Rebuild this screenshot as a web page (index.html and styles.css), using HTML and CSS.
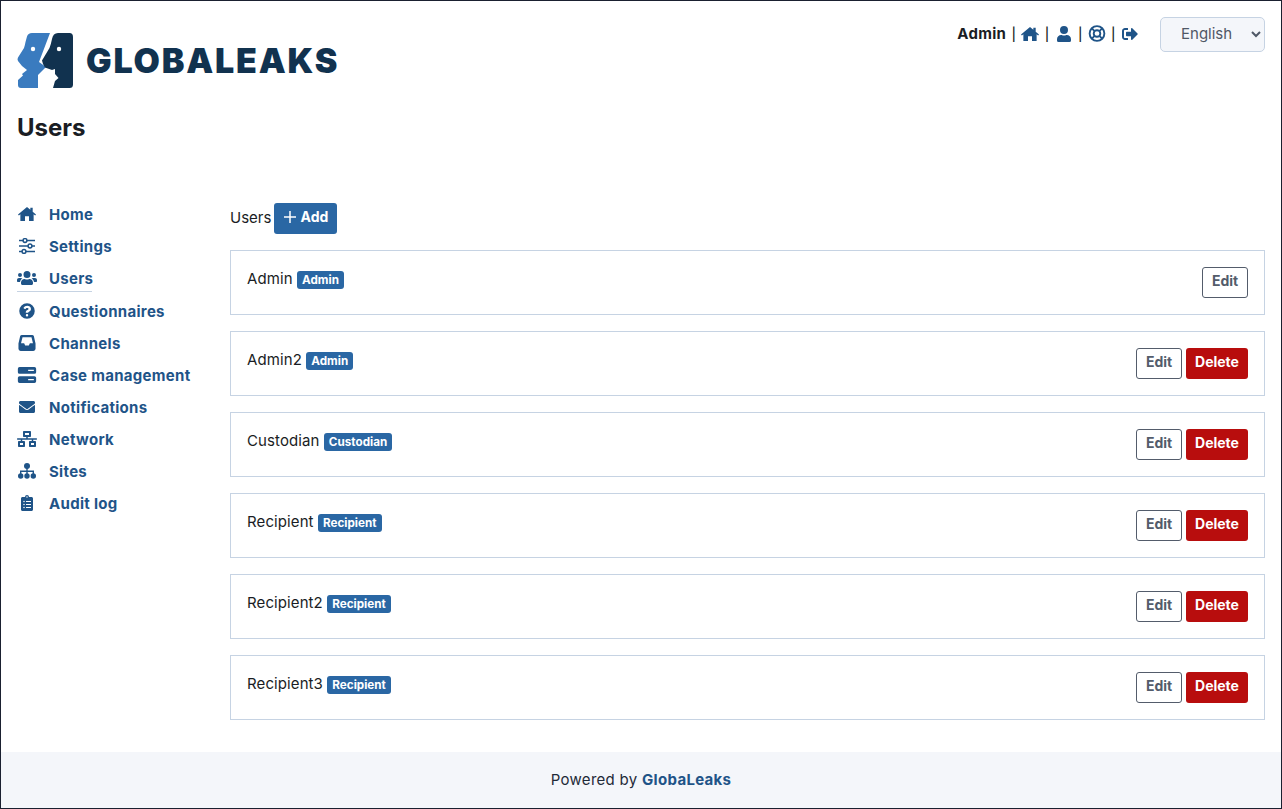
FILE: index.html
```html
<!DOCTYPE html>
<html lang="en">
<head>
    <meta charset="UTF-8">
    <title>Users</title>
    <link rel="stylesheet" href="styles.css">
</head>
<body>
    <div class="page">
        <header class="header">
            <div class="brand">
                <svg class="logo-mark" viewBox="0 0 57 56">
                    <path fill="#3a7bbf" d="M15 0H33L22 29L29 34L21 42V55H4Q1 55 1 52V47L6 42.500L5 41L10 37L5 33L1 28Q0 26 1 24.500L7 15Q8 12 8.500 9L10 3.500Q11 0 15 0Z"/>
                    <path fill="#11324f" d="M41 0H52.500Q56 0 56 4V51.500Q56 55 52.500 55H36L38 48L41.500 45L38 41V36L35 37L28 34.500L26 31L25 27.500L32.500 15Q34 11 35 6Q36 0 41 0Z"/>
                    <circle fill="#fff" cx="16" cy="16" r="2.200"/>
                    <circle fill="#fff" cx="42" cy="16" r="2.200"/>
                </svg>
                <span class="logo-text">GLOBALEAKS</span>
            </div>
            <div class="user-tools">
                <div class="user-links">
                    <b>Admin</b><span class="sep">|</span>
                    <svg class="top-icon" viewBox="0 0 576 512"><use href="#i-home"/></svg><span class="sep">|</span>
                    <svg class="top-icon" viewBox="0 0 448 512"><path d="M224 256a128 128 0 1 0 0-256 128 128 0 0 0 0 256zm90 32h-17a174 174 0 0 1-146 0h-17A134 134 0 0 0 0 422v42a48 48 0 0 0 48 48h352a48 48 0 0 0 48-48v-42a134 134 0 0 0-134-134z"/></svg><span class="sep">|</span>
                    <svg class="top-icon ring-icon" viewBox="0 0 18 18"><circle cx="9" cy="9" r="7.800"/><circle cx="9" cy="9" r="3.500"/><path d="M3.500 3.500L6.500 6.500M14.500 3.500L11.500 6.500M3.500 14.500L6.500 11.500M14.500 14.500L11.500 11.500"/></svg><span class="sep">|</span>
                    <svg class="top-icon" viewBox="0 0 512 512"><path d="M497 273 329 441c-15 15-41 4-41-17v-96H152c-13 0-24-11-24-24v-96c0-13 11-24 24-24h136V88c0-21 26-32 41-17l168 168c9 10 9 24 0 34zM192 436v-40c0-7-5-12-12-12H96c-18 0-32-14-32-32V160c0-18 14-32 32-32h84c7 0 12-5 12-12V76c0-7-5-12-12-12H96C43 64 0 107 0 160v192c0 53 43 96 96 96h84c7 0 12-5 12-12z"/></svg>
                </div>
                <select class="lang-select">
                    <option>English</option>
                </select>
            </div>
        </header>

        <h1 class="page-title">Users</h1>

        <div class="main">
            <nav class="sidebar">
                <a class="nav-item"><svg viewBox="0 0 576 512" class="nav-icon"><use href="#i-home"/></svg><span>Home</span></a>
                <a class="nav-item"><svg viewBox="0 0 16 16" class="nav-icon slider-icon"><path d="M0 2.500H16M0 8H16M0 13.500H16"/><circle cx="6" cy="2.500" r="1.900"/><circle cx="11" cy="8" r="1.900"/><circle cx="5" cy="13.500" r="1.900"/></svg><span>Settings</span></a>
                <a class="nav-item nav-current"><svg viewBox="0 0 640 512" class="nav-icon"><path d="M96 224a64 64 0 1 0 0-128 64 64 0 0 0 0 128zm448 0a64 64 0 1 0 0-128 64 64 0 0 0 0 128zm32 32h-64c-18 0-34 7-45 19 40 22 69 62 75 109h66c18 0 32-14 32-32v-32c0-35-29-64-64-64zm-256 0a112 112 0 1 0 0-224 112 112 0 0 0 0 224zm77 32h-8a157 157 0 0 1-138 0h-8c-64 0-115 52-115 115v29c0 27 21 48 48 48h288c27 0 48-21 48-48v-29c0-63-51-115-115-115zm-224-13c-11-12-27-19-45-19H64c-35 0-64 29-64 64v32c0 18 14 32 32 32h66c6-47 35-87 75-109z"/></svg><span>Users</span></a>
                <a class="nav-item"><svg viewBox="0 0 512 512" class="nav-icon"><path d="M504 256a248 248 0 1 1-496 0 248 248 0 0 1 496 0zM263 90c-54 0-89 23-116 63-4 5-3 12 3 16l35 26c5 4 13 3 17-2 18-23 30-36 58-36 20 0 46 13 46 33 0 16-13 24-34 35-24 14-56 31-56 74v4c0 7 5 12 12 12h56c7 0 12-5 12-12v-1c0-30 87-31 87-112 0-61-63-100-120-100zm-7 262a39 39 0 1 0 0 78 39 39 0 0 0 0-78z"/></svg><span>Questionnaires</span></a>
                <a class="nav-item"><svg viewBox="0 0 16 15" class="nav-icon"><path fill-rule="evenodd" d="M3.200 0H12.800Q14 0 14.400 1L16 8V13Q16 15 14 15H2Q0 15 0 13V8L1.600 1Q2 0 3.200 0ZM3.800 2L2.400 7.800H5.300L6.300 9.800H9.700L10.700 7.800H13.600L12.200 2Z"/></svg><span>Channels</span></a>
                <a class="nav-item"><svg viewBox="0 0 16 14" class="nav-icon"><path fill-rule="evenodd" d="M1.500 0H14.500Q16 0 16 1.500V4.500Q16 6 14.500 6H1.500Q0 6 0 4.500V1.500Q0 0 1.500 0ZM9 2.500V3.500H14V2.500ZM1.500 8H14.500Q16 8 16 9.500V12.500Q16 14 14.500 14H1.500Q0 14 0 12.500V9.500Q0 8 1.500 8ZM9 10.500V11.500H14V10.500Z"/></svg><span>Case management</span></a>
                <a class="nav-item"><svg viewBox="0 0 512 512" class="nav-icon"><path d="M502 191c4-3 10 0 10 5v204c0 27-21 48-48 48H48c-27 0-48-21-48-48V196c0-5 6-8 10-5 22 17 52 39 154 113 21 15 57 48 92 48s72-33 92-48c102-74 132-96 154-113zM256 320c23 0 57-29 73-41 133-97 143-105 174-129 6-5 9-12 9-19v-19c0-27-21-48-48-48H48C21 64 0 85 0 112v19c0 7 3 14 9 19 31 24 41 32 174 129 16 12 50 41 73 41z"/></svg><span>Notifications</span></a>
                <a class="nav-item"><svg viewBox="0 0 640 512" class="nav-icon"><path d="M640 264v-16c0-9-7-16-16-16H344v-40h72c18 0 32-14 32-32V32c0-18-14-32-32-32H224c-18 0-32 14-32 32v128c0 18 14 32 32 32h72v40H16c-9 0-16 7-16 16v16c0 9 7 16 16 16h104v40H64c-18 0-32 14-32 32v128c0 18 14 32 32 32h160c18 0 32-14 32-32V352c0-18-14-32-32-32h-56v-40h304v40h-56c-18 0-32 14-32 32v128c0 18 14 32 32 32h160c18 0 32-14 32-32V352c0-18-14-32-32-32h-56v-40h104c9 0 16-7 16-16zM256 128V64h128v64H256zm-64 320H96v-64h96v64zm352 0h-96v-64h96v64z"/></svg><span>Network</span></a>
                <a class="nav-item"><svg viewBox="0 0 18 16" class="nav-icon"><circle cx="9" cy="3" r="3"/><circle cx="2.700" cy="13" r="2.700"/><circle cx="9" cy="13" r="2.700"/><circle cx="15.300" cy="13" r="2.700"/><path d="M8.300 5H9.700V7.500H16V11H14.600V9H9.700V11H8.300V9H3.400V11H2V7.500H8.300Z"/></svg><span>Sites</span></a>
                <a class="nav-item"><svg viewBox="0 0 384 512" class="nav-icon"><path d="M336 64h-80a64 64 0 0 0-128 0H48C21 64 0 85 0 112v352c0 27 21 48 48 48h288c27 0 48-21 48-48V112c0-27-21-48-48-48zM96 424a24 24 0 1 1 0-48 24 24 0 0 1 0 48zm0-96a24 24 0 1 1 0-48 24 24 0 0 1 0 48zm0-96a24 24 0 1 1 0-48 24 24 0 0 1 0 48zm96-192a24 24 0 1 1 0 48 24 24 0 0 1 0-48zm128 368c0 4-4 8-8 8H168c-4 0-8-4-8-8v-16c0-4 4-8 8-8h144c4 0 8 4 8 8v16zm0-96c0 4-4 8-8 8H168c-4 0-8-4-8-8v-16c0-4 4-8 8-8h144c4 0 8 4 8 8v16zm0-96c0 4-4 8-8 8H168c-4 0-8-4-8-8v-16c0-4 4-8 8-8h144c4 0 8 4 8 8v16z"/></svg><span>Audit log</span></a>
            </nav>

            <section class="content">
                <div class="content-head">
                    <span class="content-label">Users</span>
                    <button class="btn btn-add"><svg class="plus" viewBox="0 0 12 12"><path d="M6 0V12M0 6H12"/></svg>Add</button>
                </div>

                <div class="user-card">
                    <div class="user-name">Admin <span class="badge">Admin</span></div>
                    <div class="actions"><button class="btn btn-edit">Edit</button></div>
                </div>
                <div class="user-card">
                    <div class="user-name">Admin2 <span class="badge">Admin</span></div>
                    <div class="actions"><button class="btn btn-edit">Edit</button><button class="btn btn-delete">Delete</button></div>
                </div>
                <div class="user-card">
                    <div class="user-name">Custodian <span class="badge">Custodian</span></div>
                    <div class="actions"><button class="btn btn-edit">Edit</button><button class="btn btn-delete">Delete</button></div>
                </div>
                <div class="user-card">
                    <div class="user-name">Recipient <span class="badge">Recipient</span></div>
                    <div class="actions"><button class="btn btn-edit">Edit</button><button class="btn btn-delete">Delete</button></div>
                </div>
                <div class="user-card">
                    <div class="user-name">Recipient2 <span class="badge">Recipient</span></div>
                    <div class="actions"><button class="btn btn-edit">Edit</button><button class="btn btn-delete">Delete</button></div>
                </div>
                <div class="user-card">
                    <div class="user-name">Recipient3 <span class="badge">Recipient</span></div>
                    <div class="actions"><button class="btn btn-edit">Edit</button><button class="btn btn-delete">Delete</button></div>
                </div>
            </section>
        </div>

        <footer class="footer">Powered by <b>GlobaLeaks</b></footer>
    </div>

    <svg class="sprite" xmlns="http://www.w3.org/2000/svg">
        <symbol id="i-home" viewBox="0 0 576 512"><path d="M288 30L395 118V52H470V180L576 268L548 300L500 262V480H352V328H224V480H76V262L28 300L0 268Z"/></symbol>
    </svg>
</body>
</html>
```
FILE: styles.css
```css
* {
    box-sizing: border-box;
}
html, body {
    margin: 0;
    height: 100%;
}
body {
    font-family: Inter, "Liberation Sans", sans-serif;
    font-size: 15px;
    letter-spacing: 0.1px;
    color: #1a1d24;
    background-color: #fff;
}
.sprite {
    display: none;
}
.page {
    height: 809px;
    border: 1px solid #1a2030;
    display: flex;
    flex-direction: column;
}
.header {
    display: flex;
    justify-content: space-between;
    align-items: flex-start;
    padding: 16px 16px 0 16px;
}
.brand {
    display: flex;
    align-items: center;
    margin-top: 16px;
}
.logo-mark {
    width: 57px;
    height: 56px;
}
.logo-text {
    margin-left: 12px;
    margin-top: -2px;
    font-size: 34px;
    font-weight: 900;
    letter-spacing: 1.800px;
    color: #11324f;
}
.user-tools {
    display: flex;
    align-items: center;
}
.user-links {
    display: flex;
    align-items: center;
    margin-right: 21px;
    margin-bottom: 2px;
}
.user-links b {
    letter-spacing: 0.3px;
}
.sep {
    margin: 0 5.300px;
    font-size: 13px;
    font-weight: 500;
}
.top-icon {
    width: 18px;
    height: 16px;
    fill: #1f5488;
}
.ring-icon {
    height: 17px;
    fill: none;
    stroke: #1f5488;
    stroke-width: 2;
}
.lang-select {
    width: 105px;
    height: 35px;
    padding: 0 6px 2px 16px;
    font-family: Inter, "Liberation Sans", sans-serif;
    font-size: 15px;
    color: #4f5866;
    background-color: #f4f6fa;
    border: 1px solid #c6d3e3;
    border-radius: 5px;
}
.page-title {
    margin: 24px 0 0 16px;
    font-size: 24px;
    line-height: 29px;
    font-weight: 700;
    letter-spacing: 0;
}
.main {
    display: flex;
    flex: 1;
    margin-top: 56px;
    padding: 0 16px;
}
.sidebar {
    width: 213px;
    flex-shrink: 0;
}
.nav-item {
    display: flex;
    align-items: center;
    height: 32px;
    font-size: 15px;
    font-weight: 700;
    letter-spacing: 0.3px;
    color: #1f5488;
}
.nav-icon {
    width: 20px;
    height: 16px;
    margin-right: 12px;
    fill: #1f5488;
}
.slider-icon {
    stroke: #1f5488;
    stroke-width: 1.500;
    fill: #fff;
}
.nav-current {
    position: relative;
    height: 33px;
    padding-bottom: 1px;
}
.nav-current::after {
    content: "";
    position: absolute;
    left: 0;
    width: 75px;
    bottom: 3px;
    border-bottom: 1px solid #c6d3e3;
}
.content {
    flex: 1;
}
.content-head {
    display: flex;
    align-items: center;
    gap: 3px;
    margin-top: 5px;
    margin-bottom: 16px;
    letter-spacing: 0;
}
.content-label {
    padding-bottom: 2px;
}
.btn {
    height: 31px;
    padding: 0 0 4px 0;
    border-radius: 3px;
    font-family: Inter, "Liberation Sans", sans-serif;
    font-size: 14px;
    font-weight: 700;
    border: 1px solid transparent;
}
.btn-add {
    display: flex;
    align-items: center;
    justify-content: center;
    width: 63px;
    color: #fff;
    background-color: #2a67a4;
}
.plus {
    width: 12px;
    height: 12px;
    margin-right: 5px;
    stroke: #fff;
    stroke-width: 1.500;
}
.btn-edit {
    width: 46px;
    color: #535c6b;
    background-color: #fff;
    border-color: #535c6b;
}
.btn-delete {
    width: 62px;
    margin-left: 4px;
    color: #fff;
    background-color: #b80d0d;
}
.user-card {
    display: flex;
    justify-content: space-between;
    height: 65px;
    margin-bottom: 16px;
    padding: 16px 16px 0 16px;
    border: 1px solid #c6d3e3;
}
.user-name {
    font-size: 15px;
    line-height: 24px;
}
.badge {
    display: inline-block;
    padding: 0 5px;
    height: 18px;
    line-height: 18px;
    font-size: 11.700px;
    font-weight: 700;
    letter-spacing: 0;
    color: #fff;
    background-color: #2a67a4;
    border-radius: 3px;
}
.actions {
    display: flex;
}
.footer {
    height: 56px;
    line-height: 56px;
    text-align: center;
    font-size: 15px;
    letter-spacing: 0.3px;
    color: #1f2a38;
    background-color: #f4f6fa;
}
.footer b {
    color: #1f5488;
}
```
